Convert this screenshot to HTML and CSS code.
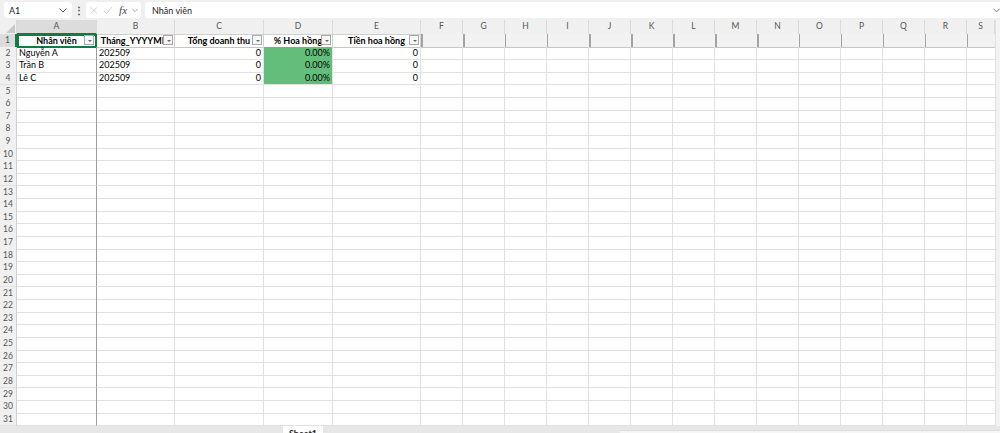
FILE: index.html
```html
<!DOCTYPE html>
<html lang="vi">
<head>
<meta charset="utf-8">
<title>Sheet</title>
<link rel="stylesheet" href="styles.css">
</head>
<body>
<div class="app">
  <div class="fbar">
    <div class="namebox"><span>A1</span><svg class="chev" viewBox="0 0 8 5" width="8" height="5"><path d="M0.5 0.5 L4 4 L7.5 0.5" fill="none" stroke="#555" stroke-width="1"/></svg></div>
    <div class="dots">⋮</div>
    <div class="fxbox">
      <svg viewBox="0 0 10 10" width="9" height="9"><path d="M1 1 L9 9 M9 1 L1 9" stroke="#b5b5b5" stroke-width="0.9" fill="none"/></svg>
      <svg viewBox="0 0 12 10" width="11" height="9"><path d="M1 5.5 L4.5 9 L11 1" stroke="#b5b5b5" stroke-width="0.9" fill="none"/></svg>
      <span class="fx">fx</span>
      <svg class="chev" viewBox="0 0 8 5" width="7" height="5"><path d="M0.5 0.5 L4 4 L7.5 0.5" fill="none" stroke="#777" stroke-width="0.9"/></svg>
    </div>
    <div class="finput"><span>Nhân viên</span><svg class="chev" viewBox="0 0 8 5" width="7" height="5"><path d="M0.5 0.5 L4 4 L7.5 0.5" fill="none" stroke="#555" stroke-width="0.9"/></svg></div>
  </div>

  <div class="sheetwrap">
    <div class="sheet" id="sheet">
      <div class="row hdr">
        <div class="corner"><svg viewBox="0 0 10 10" width="9" height="9"><path d="M10 0 L10 10 L0 10 Z" fill="#c9c9c9"/></svg></div>
        <div class="ch ch-sel">A</div>
        <div class="ch">B</div>
        <div class="ch">C</div>
        <div class="ch">D</div>
        <div class="ch">E</div>
        <div class="chrest">
          <div class="ch">F</div><div class="ch">G</div><div class="ch">H</div><div class="ch">I</div>
          <div class="ch">J</div><div class="ch">K</div><div class="ch">L</div><div class="ch">M</div>
          <div class="ch">N</div><div class="ch">O</div><div class="ch">P</div><div class="ch">Q</div>
          <div class="ch">R</div><div class="ch">S</div>
        </div>
      </div>

      <div class="row r1">
        <div class="rh rh-sel">1</div>
        <div class="c h fa sel"><span class="ht">Nhân viên</span><span class="dd"></span></div>
        <div class="c h"><span class="ht">Tháng_YYYYMM</span><span class="dd"></span></div>
        <div class="c h"><span class="ht">Tổng doanh thu</span><span class="dd"></span></div>
        <div class="c h"><span class="ht">% Hoa hồng</span><span class="dd"></span></div>
        <div class="c h"><span class="ht">Tiền hoa hồng</span><span class="dd"></span></div>
        <div class="rest rest1"></div>
      </div>

      <div class="row">
        <div class="rh">2</div>
        <div class="c fa">Nguyễn A</div>
        <div class="c">202509</div>
        <div class="c num">0</div>
        <div class="c num green">0.00%</div>
        <div class="c num">0</div>
        <div class="rest"></div>
      </div>
      <div class="row">
        <div class="rh">3</div>
        <div class="c fa">Trần B</div>
        <div class="c">202509</div>
        <div class="c num">0</div>
        <div class="c num green">0.00%</div>
        <div class="c num">0</div>
        <div class="rest"></div>
      </div>
      <div class="row">
        <div class="rh">4</div>
        <div class="c fa">Lê C</div>
        <div class="c">202509</div>
        <div class="c num">0</div>
        <div class="c num green">0.00%</div>
        <div class="c num">0</div>
        <div class="rest"></div>
      </div>
    </div>
    <div class="vscroll"></div>
  </div>

  <div class="tabbar">
    <div class="tabgap"></div>
    <div class="tab">Sheet1</div>
    <div class="tabgap2"></div>
    <div class="hscroll"></div>
  </div>
</div>
<script src="script.js"></script>
</body>
</html>
```

FILE: styles.css
```css
* { box-sizing: border-box; }
html, body { margin: 0; padding: 0; }
body {
  width: 1000px;
  height: 433px;
  overflow: hidden;
  background: #ffffff;
  font-family: Lato, "Noto Sans", sans-serif;
  color: #000;
}
.app {
  display: flex;
  flex-direction: column;
  height: 433px;
}

/* formula bar */
.fbar {
  height: 20px;
  flex: none;
  background: #f0f0f0;
  display: flex;
  align-items: center;
  padding: 0 0 0 4px;
  font-size: 9px;
  color: #222;
}
.namebox {
  width: 68px;
  height: 16px;
  background: #fff;
  border-radius: 3px;
  display: flex;
  align-items: center;
  justify-content: space-between;
  padding: 0 5px 0 5px;
}
.dots {
  width: 14px;
  text-align: center;
  font-size: 10px;
  color: #444;
  font-weight: bold;
}
.fxbox {
  width: 55px;
  height: 16px;
  background: #fff;
  border-radius: 3px;
  display: flex;
  align-items: center;
  gap: 5px;
  padding: 0 3px 0 4px;
}
.fx {
  font-family: "Liberation Serif", serif;
  font-style: italic;
  font-size: 11px;
  color: #444;
  margin-left: 2px;
}
.finput {
  flex: 1;
  height: 16px;
  margin-left: 4px;
  background: #fff;
  border-radius: 3px 0 0 3px;
  display: flex;
  align-items: center;
  justify-content: space-between;
  padding: 0 0 0 7px;
}

/* sheet */
.sheetwrap {
  flex: none;
  display: flex;
  height: 406px;
  overflow: hidden;
}
.sheet {
  width: 995px;
  flex: none;
}
.vscroll {
  flex: 1;
  background: #f3f3f3;
  border-left: 1px solid #e0e0e0;
}
.row {
  display: grid;
  grid-template-columns: 17px 80px 78px 89px 69px 88px 574px;
  height: 12.64px;
}
.row.hdr {
  height: 14px;
}
.corner {
  background: #f0f0f0;
  border-right: 1px solid #d8d8d8;
  border-bottom: 1px solid #d0d0d0;
  display: flex;
  align-items: flex-end;
  justify-content: flex-end;
  padding: 0 1px 1px 0;
}
.ch {
  background: #f0f0f0;
  border-right: 1px solid #dadada;
  border-bottom: 1px solid #d0d0d0;
  text-align: center;
  font-size: 8.5px;
  line-height: 13px;
  color: #555;
}
.ch-sel {
  background: #dcdcdc;
  border-bottom: 2px solid #107c41;
  color: #3d5c47;
}
.chrest {
  display: grid;
  grid-template-columns: repeat(13, 42px) 28px;
}
.rh {
  background: #f0f0f0;
  border-right: 1px solid #d0d0d0;
  border-bottom: 1px solid #e2e2e2;
  font-size: 8.5px;
  color: #555;
  text-align: center;
  line-height: 12.6px;
}
.rh-sel {
  background: #dcdcdc;
  color: #3d5c47;
  border-right: 2px solid #107c41;
}
.c {
  position: relative;
  border-right: 1px solid #e1e1e1;
  border-bottom: 1px solid #e1e1e1;
  font-size: 9px;
  line-height: 12px;
  padding: 0 2px;
  white-space: nowrap;
  overflow: hidden;
}
.c.fa {
  border-right: 1px solid #9d9d9d;
}
.c.num { text-align: right; }
.c.green { background: #63be7b; }
.rest {
  border-bottom: 1px solid #e1e1e1;
  background-image: repeating-linear-gradient(to right, transparent 0 41px, #e1e1e1 41px 42px);
}

/* header row 1 */
.r1 .c, .r1 .rest { border-bottom: 1px solid #c6c6c6; }
.r1 .c { border-right: 1px solid #cfcfcf; }
.r1 .c.fa { border-right: 1px solid #9d9d9d; }
.c.h {
  font-weight: bold;
  text-align: center;
  padding: 0;
}
.ht {
  display: block;
  width: 100%;
  text-align: center;
  white-space: nowrap;
  overflow: visible;
  padding-top: 0.5px;
}
.dd {
  position: absolute;
  right: 1px;
  top: 1px;
  width: 10px;
  height: 10px;
  background: #f7f7f7;
  border: 1px solid #a9a9a9;
}
.dd::after {
  content: "";
  position: absolute;
  left: 2.5px;
  top: 3.5px;
  border-left: 2px solid transparent;
  border-right: 2px solid transparent;
  border-top: 2px solid #666;
}
.sel {
  outline: 2px solid #107c41;
  outline-offset: -2px;
  overflow: visible;
}
.sel .dd { right: 2px; }
.rest1 {
  background-color: #f2f2f2;
  background-image: repeating-linear-gradient(to right, #a3a3a3 0 1.5px, transparent 1.5px 42px);
}

/* tab bar */
.tabbar {
  flex: 1;
  background: #e7e7e7;
  display: flex;
  align-items: flex-end;
  overflow: hidden;
}
.tabgap { width: 283px; flex: none; }
.tab {
  width: 40px;
  height: 7px;
  background: #fff;
  font-size: 9px;
  font-weight: bold;
  line-height: 16px;
  padding-left: 6px;
  overflow: hidden;
  color: #222;
  align-self: flex-end;
}
.tabgap2 { width: 297px; flex: none; }
.hscroll {
  flex: 1;
  height: 3px;
  background: #f6f6f6;
  border-top: 1px solid #dcdcdc;
}
```

FILE: script.js
```js
(function () {
  var sheet = document.getElementById('sheet');
  for (var r = 5; r <= 31; r++) {
    var row = document.createElement('div');
    row.className = 'row';
    var rh = document.createElement('div');
    rh.className = 'rh';
    rh.textContent = String(r);
    row.appendChild(rh);
    for (var c = 0; c < 5; c++) {
      var cell = document.createElement('div');
      cell.className = c === 0 ? 'c fa' : 'c';
      row.appendChild(cell);
    }
    var rest = document.createElement('div');
    rest.className = 'rest';
    row.appendChild(rest);
    sheet.appendChild(row);
  }
})();
```
